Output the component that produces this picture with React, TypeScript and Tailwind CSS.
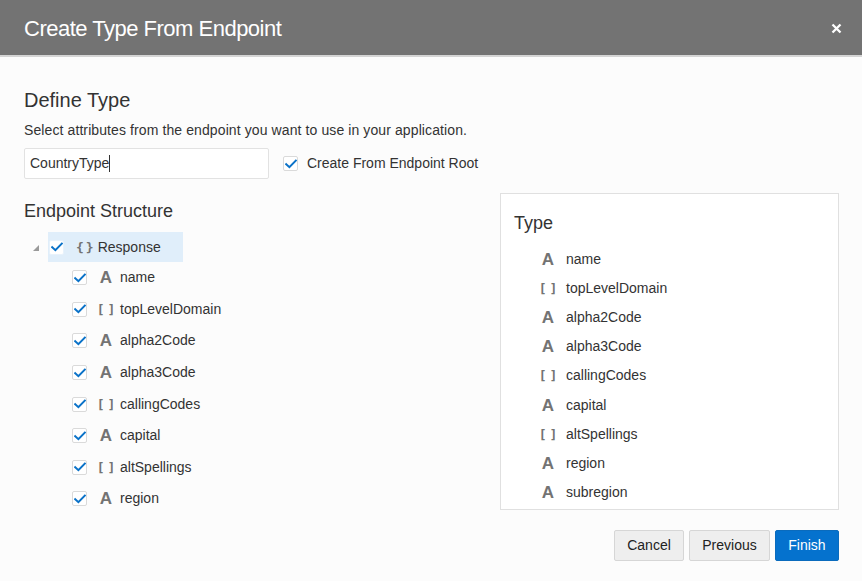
import React from "react";

const Check = ({ bordered = true }: { bordered?: boolean }) => (
  <span
    className={`inline-flex items-center justify-center w-[15px] h-[15px] rounded-[2px] bg-white ${
      bordered ? "border border-[#dadada]" : "border border-[#e8f2fb]"
    }`}
  >
    <svg width="12" height="10" viewBox="0 0 12 10">
      <path d="M1.2 5.2 L4.4 8.2 L10.8 1.6" fill="none" stroke="#0a72c8" strokeWidth="2" strokeLinecap="square" />
    </svg>
  </span>
);

const TypeIcon = ({ kind }: { kind: "A" | "[]" | "{}" }) => {
  if (kind === "A")
    return (
      <span className="w-[14px] text-center text-[17px] font-bold leading-none text-[#737373]" style={{ fontFamily: "'Liberation Sans', Arial, sans-serif" }}>
        A
      </span>
    );
  const [l, r] = kind === "[]" ? ["[", "]"] : ["{", "}"];
  return (
    <span className={`flex ${kind === "[]" ? "gap-[3px]" : "gap-[2px]"} text-[13px] font-bold leading-none text-[#737373]`} style={{ fontFamily: "'DejaVu Sans Mono', monospace" }}>
      <span>{l}</span>
      <span>{r}</span>
    </span>
  );
};

const items: { k: "A" | "[]"; n: string }[] = [
  { k: "A", n: "name" },
  { k: "[]", n: "topLevelDomain" },
  { k: "A", n: "alpha2Code" },
  { k: "A", n: "alpha3Code" },
  { k: "[]", n: "callingCodes" },
  { k: "A", n: "capital" },
  { k: "[]", n: "altSpellings" },
  { k: "A", n: "region" },
];

const typeItems: { k: "A" | "[]"; n: string }[] = [...items, { k: "A", n: "subregion" }];

export default function App() {
  return (
    <div
      className="w-[862px] h-[581px] bg-[#fcfcfc] text-[#333] overflow-hidden flex flex-col"
      style={{ fontFamily: "'Liberation Sans', Arial, sans-serif" }}
    >
      <div className="h-[57px] shrink-0 bg-[#737373] border-b-2 border-[#d4d4d4] flex items-center justify-between pl-[24px] pr-[20px]">
        <div className="text-white text-[22px] tracking-[-0.5px] pt-[1px]">Create Type From Endpoint</div>
        <svg width="11" height="11" viewBox="0 0 11 11" className="mt-[2px]">
          <path d="M1.5 1.5 L9.5 9.5 M9.5 1.5 L1.5 9.5" stroke="white" strokeWidth="2.3" />
        </svg>
      </div>

      <div className="flex-1 flex flex-col pl-[24px] pr-[23px]">
        <div className="mt-[31px] text-[20px] leading-[24px] text-[#333]">Define Type</div>
        <div className="mt-[9px] text-[14px] leading-[18px] tracking-[0.1px]">Select attributes from the endpoint you want to use in your application.</div>
        <div className="mt-[9px] flex items-center">
          <div className="w-[245px] h-[31px] bg-white border border-[#e2e2e2] rounded-[2px] flex items-center pl-[5px] text-[14px]">
            CountryType<span className="inline-block w-[1px] h-[17px] bg-[#333]" />
          </div>
          <div className="ml-[14px] flex items-center">
            <Check />
            <span className="ml-[9px] text-[14px]">Create From Endpoint Root</span>
          </div>
        </div>

        <div className="mt-[14px] flex">
          <div className="w-[476px] flex flex-col">
            <div className="mt-[7px] text-[18px] leading-[22px]">Endpoint Structure</div>
            <div className="mt-[10px] flex items-center h-[30px]">
              <svg width="8" height="8" viewBox="0 0 8 8" className="ml-[8px] mt-[2px]">
                <path d="M7 1 L7 7 L1 7 Z" fill="#9a9a9a" />
              </svg>
              <div className="ml-[8px] h-[30px] w-[135px] bg-[#e0eefa] flex items-center pl-[1px]">
                <Check bordered={false} />
                <span className="ml-[12px]">
                  <TypeIcon kind="{}" />
                </span>
                <span className="ml-[4px] text-[14px]">Response</span>
              </div>
            </div>
            <div className="flex flex-col">
              {items.map((it) => (
                <div key={it.n} className="h-[31.6px] flex items-center pl-[48px]">
                  <Check />
                  <span className="ml-[12px] w-[14px] flex justify-center">
                    <TypeIcon kind={it.k} />
                  </span>
                  <span className="ml-[7px] text-[14px]">{it.n}</span>
                </div>
              ))}
            </div>
          </div>

          <div className="w-[339px] h-[317px] bg-white border border-[#e0e0e0] flex flex-col pl-[13px]">
            <div className="mt-[18px] text-[18px] leading-[22px]">Type</div>
            <div className="mt-[11px] flex flex-col">
              {typeItems.map((it) => (
                <div key={it.n} className="h-[29.1px] flex items-center pl-[27px]">
                  <span className="w-[14px] flex justify-center">
                    <TypeIcon kind={it.k} />
                  </span>
                  <span className="ml-[11px] text-[14px]">{it.n}</span>
                </div>
              ))}
            </div>
          </div>
        </div>

        <div className="mt-[15px] flex justify-end gap-[5px] text-[14px]">
          <button className="h-[31px] w-[70px] bg-[#eeeeee] border border-[#d6d6d6] rounded-[2px] text-[#222]">Cancel</button>
          <button className="h-[31px] w-[81px] bg-[#eeeeee] border border-[#d6d6d6] rounded-[2px] text-[#222]">Previous</button>
          <button className="h-[31px] w-[64px] bg-[#0572ce] border border-[#0a6bbd] rounded-[2px] text-white">Finish</button>
        </div>
      </div>
    </div>
  );
}
